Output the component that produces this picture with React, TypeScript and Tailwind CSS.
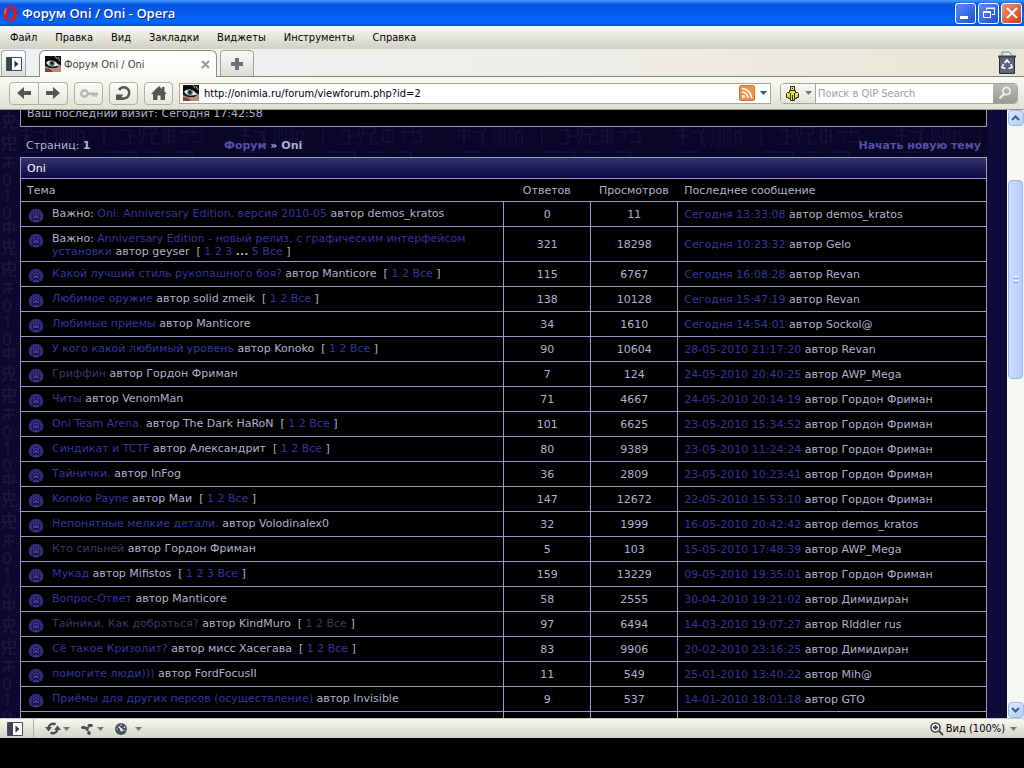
import React from "react";

type Topic = {
  title: string;
  author: string;
  replies: number;
  views: number;
  last: string;
  lastBy: string;
  pages?: string[];
  sticky?: boolean;
  visited?: boolean;
};

const topics: Topic[] = [
  { title: "Oni: Anniversary Edition, версия 2010-05", author: "demos_kratos", replies: 0, views: 11, last: "Сегодня 13:33:08", lastBy: "demos_kratos", sticky: true },
  { title: "Anniversary Edition - новый релиз, с графическим интерфейсом установки", author: "geyser", replies: 321, views: 18298, last: "Сегодня 10:23:32", lastBy: "Gelo", sticky: true, pages: ["1", "2", "3", "...", "5", "Все"] },
  { title: "Какой лучший стиль рукопашного боя?", author: "Manticore", replies: 115, views: 6767, last: "Сегодня 16:08:28", lastBy: "Revan", pages: ["1", "2", "Все"] },
  { title: "Любимое оружие", author: "solid zmeik", replies: 138, views: 10128, last: "Сегодня 15:47:19", lastBy: "Revan", pages: ["1", "2", "Все"] },
  { title: "Любимые приемы", author: "Manticore", replies: 34, views: 1610, last: "Сегодня 14:54:01", lastBy: "Sockol@" },
  { title: "У кого какой любимый уровень", author: "Konoko", replies: 90, views: 10604, last: "28-05-2010 21:17:20", lastBy: "Revan", pages: ["1", "2", "Все"] },
  { title: "Гриффин", author: "Гордон Фриман", replies: 7, views: 124, last: "24-05-2010 20:40:25", lastBy: "AWP_Mega", visited: true },
  { title: "Читы", author: "VenomMan", replies: 71, views: 4667, last: "24-05-2010 20:14:19", lastBy: "Гордон Фриман" },
  { title: "Oni Team Arena.", author: "The Dark HaRoN", replies: 101, views: 6625, last: "23-05-2010 15:34:52", lastBy: "Гордон Фриман", pages: ["1", "2", "Все"] },
  { title: "Синдикат и TCTF", author: "Александрит", replies: 80, views: 9389, last: "23-05-2010 11:24:24", lastBy: "Гордон Фриман", pages: ["1", "2", "Все"] },
  { title: "Тайнички.", author: "InFog", replies: 36, views: 2809, last: "23-05-2010 10:23:41", lastBy: "Гордон Фриман" },
  { title: "Konoko Payne", author: "Маи", replies: 147, views: 12672, last: "22-05-2010 15:53:10", lastBy: "Гордон Фриман", pages: ["1", "2", "Все"] },
  { title: "Непонятные мелкие детали.", author: "Volodinalex0", replies: 32, views: 1999, last: "16-05-2010 20:42:42", lastBy: "demos_kratos" },
  { title: "Кто сильней", author: "Гордон Фриман", replies: 5, views: 103, last: "15-05-2010 17:48:39", lastBy: "AWP_Mega", visited: true },
  { title: "Мукад", author: "Mifistos", replies: 159, views: 13229, last: "09-05-2010 19:35:01", lastBy: "Гордон Фриман", pages: ["1", "2", "3", "Все"] },
  { title: "Вопрос-Ответ", author: "Manticore", replies: 58, views: 2555, last: "30-04-2010 19:21:02", lastBy: "Димидиран" },
  { title: "Тайники. Как добраться?", author: "KindMuro", replies: 97, views: 6494, last: "14-03-2010 19:07:27", lastBy: "RIddler rus", pages: ["1", "2", "Все"], visited: true },
  { title: "Сё такое Кризолит?", author: "мисс Хасегава", replies: 83, views: 9906, last: "20-02-2010 23:16:25", lastBy: "Димидиран", pages: ["1", "2", "Все"] },
  { title: "помогите люди)))", author: "FordFocusII", replies: 11, views: 549, last: "25-01-2010 13:40:22", lastBy: "Mih@" },
  { title: "Приёмы для других персов (осуществление)", author: "Invisible", replies: 9, views: 537, last: "14-01-2010 18:01:18", lastBy: "GTO" },
];

const menu = ["Файл", "Правка", "Вид", "Закладки", "Виджеты", "Инструменты", "Справка"];

function TopicIcon() {
  return (
    <svg width="16" height="16" viewBox="0 0 16 16" className="shrink-0" aria-hidden="true">
      <path d="M3 14.500A7.400 7.400 0 1 1 13 14.500L11 12.500H5z" fill="#3a3284" />
      <path d="M3.300 12.500A6 6 0 1 1 12.700 12.500" fill="none" stroke="#1d1852" strokeWidth="1.200" strokeDasharray="1.500 1.300" />
      <circle cx="8" cy="9" r="4.300" fill="#0c0828" />
      <circle cx="8" cy="9" r="3.400" fill="#443b9c" />
      <path d="M5.800 9.500a2.200 2.200 0 0 1 4.400 0M6 11.500h4" fill="none" stroke="#120d3c" strokeWidth="1" />
      <path d="M4 14.500Q8 16.500 12 14.500L11 13H5z" fill="#3a3284" />
    </svg>
  );
}

function Favicon() {
  return (
    <svg width="16" height="16" viewBox="0 0 16 16" className="shrink-0" aria-hidden="true">
      <path fill="#170d12" d="M0 0h16v16H0z" />
      <path fill="#b98b7c" d="M0 10l5 2 6 0 5-3v7H0z" />
      <path fill="#7b4238" d="M0 12l5 1 3 3H0z" />
      <path fill="#ede9e6" d="M1 6.500Q5 3 10 5.500L14 9Q7 12 3 9z" />
      <circle cx="7" cy="7.400" r="2.700" fill="#3d7668" />
      <circle cx="7" cy="7.200" r="1.300" fill="#06110e" />
      <path d="M0 5Q6 1 11 4.500L16 8" fill="none" stroke="#000" strokeWidth="1.800" />
      <path d="M10 0l2 3M13 1l2 4M12 10l3-1" stroke="#d9d2cc" strokeWidth=".8" />
    </svg>
  );
}

function Caret({ className }: { className: string }) {
  return (
    <svg width="7" height="4" viewBox="0 0 7 4" className={className} aria-hidden="true">
      <path d="M0 0h7L3.500 4z" fill="currentColor" />
    </svg>
  );
}

function PanelIcon() {
  return (
    <svg width="16" height="14" viewBox="0 0 16 14" aria-hidden="true">
      <path fill="#fff" stroke="#444b5a" d="M.5 .5h15v13H.5z" />
      <path fill="#3c4354" d="M1 1h5v12H1z" />
      <path fill="#2f3646" d="M8.500 3.500L12.500 7l-4 3.500z" />
    </svg>
  );
}

function Backdrop() {
  return (
    <>
      <svg className="absolute inset-0 h-full w-full" aria-hidden="true">
        <defs>
          <pattern id="city" width="219" height="88" x="-14" y="8" patternUnits="userSpaceOnUse">
            <rect width="219" height="88" fill="#0a062a" />
            <g fill="none" stroke="#17133b">
              <path d="M62 8q-6 10 0 20M68 8q6 10 0 20M92 14h6v12h-6zM118 12v16M136 12h8v14h-8M144 18h10v-8M158 10h12v6h-12zM158 16l-4 12M166 16v10h8M178 12h10v12h-10zM183 8v18M194 14h6v8M202 14h14v10h-10M208 8v8" />
              <path d="M34 12h12M34 18h12M40 8v20M48 14h10v14M36 34h20M120 34h30v8h-30M160 34h18M190 34h16v6" />
              <path d="M40 50h22v22H40zM46 56h10v8H46zM70 50h24M76 56h16v12H76zM108 50v20M114 54h12M140 50h30v10M146 66h14v10h-14zM186 52h18v18h-18" />
            </g>
            <path d="M74 2v28M77 2v28M81 2v28M85 2v28M88 2v28M160 42v36M164 42v36M168 42v36" stroke="#14103a" />
          </pattern>
          <pattern id="glyphs" width="20" height="126" patternUnits="userSpaceOnUse">
            <rect width="20" height="126" fill="#0c0830" />
            <g fill="none" stroke="#1b1742" strokeWidth="1.400">
              <path d="M4 6h10v6H4zM9 2v10M6 12q0 6-4 7M11 12v6h6M3 28h12v6H3zM9 24v10M5 34q0 5-3 7M10 34v6h6M4 48h10M9 46v12M5 53h9M3 58l3-4" />
              <ellipse cx="7" cy="70" rx="3.500" ry="5.500" />
              <path d="M5 82l3-2v12" />
              <ellipse cx="7" cy="103" rx="3.500" ry="5.500" />
              <path d="M4 114h10v6H4zM9 111v12" />
            </g>
          </pattern>
        </defs>
        <rect width="100%" height="100%" fill="url(#city)" />
        <rect width="20" height="100%" fill="url(#glyphs)" />
      </svg>
      <div className="absolute inset-y-0 right-0 w-5 bg-[repeating-linear-gradient(90deg,#0e0a36_0,#0e0a36_3px,#120d3e_3px,#120d3e_4px)]" />
    </>
  );
}

function TopicRow({ t }: { t: Topic }) {
  const tone = t.visited ? "text-[#40346a]" : "text-[#3832a2]";
  return (
    <tr className="h-[25px]">
      <td className="border-t border-[#9a98c8] pt-[5px] pr-1 pb-[3px] pl-[7px] align-top">
        <div className="flex items-start gap-2">
          <TopicIcon />
          <div>
            {t.sticky && "Важно: "}
            <a href="#topic" className={tone}>{t.title}</a>
            {" автор " + t.author}
            {t.pages && (
              <span>
                {"\u00a0 [ "}
                {t.pages.map((p) => (
                  <React.Fragment key={p}>
                    {p === "..." ? <b>...</b> : <a href="#page" className={tone}>{p}</a>}{" "}
                  </React.Fragment>
                ))}
                ]
              </span>
            )}
          </div>
        </div>
      </td>
      <td className="border-t border-l border-[#9a98c8] text-center">{t.replies}</td>
      <td className="border-t border-l border-[#9a98c8] text-center">{t.views}</td>
      <td className="border-t border-l border-[#9a98c8] pl-[6px]">
        <a href="#last" className="text-[#3832a2]">{t.last}</a> автор {t.lastBy}
      </td>
    </tr>
  );
}

const toolBtn = "flex h-[23px] items-center justify-center rounded border border-[#b0b0a4] bg-gradient-to-b from-[#fdfdfa] to-[#e6e6dc]";
const scrollBtn = "flex h-4 w-4 items-center justify-center rounded-sm border border-[#9db8ec] bg-gradient-to-br from-[#dce7fe] to-[#b4cbfa] text-[#3f5c92]";

export default function App() {
  return (
    <div className="flex h-screen flex-col overflow-hidden bg-black font-['DejaVu_Sans_Condensed','DejaVu_Sans',sans-serif] text-[11px] leading-[13px] text-black">
      <header className="flex h-[26px] shrink-0 items-center bg-[linear-gradient(#3f95fb_0,#2a82f2_2px,#0557e4_4px,#0557e4_11px,#0264fb_18px,#0264fb_23px,#0144d0)] pr-[2px] pl-[3px]">
        <svg width="15" height="17" viewBox="0 0 15 17" aria-hidden="true">
          <path fillRule="evenodd" fill="#d51a23" d="M7.500.5C3 .5.700 4 .700 8.500S3 16.500 7.500 16.500 14.300 13 14.300 8.500 12 .500 7.500 .500zM7.500 2.500c1.800 0 2.600 2.400 2.600 6s-.8 6-2.600 6-2.600-2.400-2.600-6 .8-6 2.600-6z" />
          <path d="M3 3.500Q1.600 6 1.900 9" fill="none" stroke="#ff8a88" />
        </svg>
        <h1 className="ml-1 flex-1 font-['Open_Sans',sans-serif] text-[13px] leading-[18px] font-semibold text-white [text-shadow:1px_1px_0_#0a2d8c]">Форум Oni / Oni - Opera</h1>
        <div className="flex gap-[2px]">
          <button aria-label="Свернуть" className="flex h-[21px] w-[21px] items-end rounded-[3px] border border-white bg-gradient-to-br from-[#5a8cf4] to-[#1d4fd8] p-1">
            <svg width="8" height="3" className="block" aria-hidden="true"><path fill="#fff" d="M0 0h8v3H0z" /></svg>
          </button>
          <button aria-label="Восстановить" className="flex h-[21px] w-[21px] items-center justify-center rounded-[3px] border border-white bg-gradient-to-br from-[#5a8cf4] to-[#1d4fd8]">
            <svg width="12" height="12" viewBox="0 0 12 12" aria-hidden="true"><path fill="none" stroke="#fff" d="M3.500 3V1.500h8v6H9M3 1h9M.5 4.500h7v6h-7zM0 5.500h8" /></svg>
          </button>
          <button aria-label="Закрыть" className="flex h-[21px] w-[21px] items-center justify-center rounded-[3px] border border-white bg-gradient-to-br from-[#ee9070] to-[#cf3a13]">
            <svg width="12" height="12" viewBox="0 0 12 12" aria-hidden="true"><path stroke="#fff" strokeWidth="2" d="M1 1l10 10M11 1L1 11" /></svg>
          </button>
        </div>
      </header>

      <nav className="flex h-[23px] shrink-0 items-center gap-[18px] bg-gradient-to-b from-[#fafaf5] to-[#d0d1c3] pl-[10px]">
        {menu.map((m) => <button key={m}>{m}</button>)}
      </nav>

      <div className="flex h-7 shrink-0 items-end border-b border-[#84847c] bg-gradient-to-r from-[#eef1f4] via-[#efeeea] to-[#e9e6d6] pl-px">
        <button aria-label="Панели" className="flex h-[26px] w-[25px] items-center justify-center rounded-t border border-b-0 border-[#a3a7a8] bg-gradient-to-b from-white to-[#dcdedb]"><PanelIcon /></button>
        <div className="ml-[13px] flex h-[27px] w-[178px] translate-y-px items-center rounded-t-md border border-b-0 border-[#8d8d88] bg-gradient-to-b from-white to-[#fafaf6] pr-[6px] pl-[5px]">
          <Favicon />
          <span className="ml-[3px] flex-1 text-[#444]">Форум Oni / Oni</span>
          <button aria-label="Закрыть вкладку">
            <svg width="9" height="9" viewBox="0 0 9 9" aria-hidden="true"><path stroke="#9a9a96" strokeWidth="2" d="M1 1l7 7M8 1L1 8" /></svg>
          </button>
        </div>
        <button aria-label="Новая вкладка" className="ml-[3px] flex h-[26px] w-[34px] items-center justify-center rounded-t border border-b-0 border-[#a3a39d] bg-gradient-to-b from-[#fafafa] to-[#dcdcd6]">
          <svg width="12" height="12" viewBox="0 0 12 12" aria-hidden="true"><path fill="#6b707a" d="M4 0h4v4h4v4H8v4H4V8H0V4h4z" /></svg>
        </button>
        <button aria-label="Корзина" className="mr-2 mb-[2px] ml-auto">
          <svg width="18" height="23" viewBox="0 0 18 23" aria-hidden="true">
            <path fill="#dcebf0" stroke="#6c8794" d="M4 5V1h7l4 4" />
            <path fill="#5e6378" stroke="#272b3c" d="M1.500 5.500h15v17h-15z" />
            <path d="M0 5.500h18" stroke="#3b4054" strokeWidth="2" />
            <path d="M6.500 12L9 9l2.500 3M13 13l1 3.500-3.500 1M7.500 17.500L4 16.500l1.500-3.500" fill="none" stroke="#fff" strokeWidth="1.600" />
          </svg>
        </button>
      </div>

      <div className="flex h-[33px] shrink-0 items-center border-b border-[#9a9a90] bg-gradient-to-b from-[#fafaf4] to-[#e0e1d2] pr-[6px] pl-[9px]">
        <div className="flex">
          <button aria-label="Назад" className={toolBtn + " w-[30px] rounded-r-none"}>
            <svg width="14" height="12" viewBox="0 0 14 12" aria-hidden="true"><path fill="#555552" d="M0 6l7-6v4h7v4H7v4z" /></svg>
          </button>
          <button aria-label="Вперёд" className={toolBtn + " w-[29px] rounded-l-none border-l-0"}>
            <svg width="14" height="12" viewBox="0 0 14 12" aria-hidden="true"><path fill="#555552" d="M14 6L7 0v4H0v4h7v4z" /></svg>
          </button>
        </div>
        <button aria-label="Ключ" className={toolBtn + " ml-[6px] w-[29px]"}>
          <svg width="18" height="9" viewBox="0 0 18 9" aria-hidden="true"><circle cx="4.500" cy="4.500" r="3.200" fill="none" stroke="#b6b6b0" strokeWidth="2.400" /><path fill="#b6b6b0" d="M8 3.500h10v2.500h-1v2h-2V6h-1v1.500h-2V6H8z" /></svg>
        </button>
        <button aria-label="Обновить" className={toolBtn + " ml-[6px] w-[29px]"}>
          <svg width="17" height="16" viewBox="0 0 17 16" aria-hidden="true"><path fill="none" stroke="#555552" strokeWidth="2.600" d="M4 5A5.500 5.500 0 1 1 8 13.300" /><path fill="#555552" d="M1 9.500h7.500L6.500 11.500l2 2V15H1z" /></svg>
        </button>
        <button aria-label="Домой" className={toolBtn + " ml-[6px] w-[29px]"}>
          <svg width="16" height="14" viewBox="0 0 16 14" aria-hidden="true"><path fill="#555552" d="M8 0l3 3V1h2.500v4.500L16 8h-2v6H9.500V9.500h-3V14H2V8H0z" /></svg>
        </button>
        <label className="ml-[6px] flex h-[21px] min-w-0 flex-1 items-center border border-[#a5a59c] bg-white pr-[3px] pl-[3px]">
          <Favicon />
          <input aria-label="Адрес" defaultValue="http://onimia.ru/forum/viewforum.php?id=2" className="ml-[5px] min-w-0 flex-1 outline-none" />
          <svg width="16" height="16" viewBox="0 0 16 16" aria-hidden="true">
            <rect x=".5" y=".5" width="15" height="15" rx="1.500" fill="#ee9448" stroke="#cf7530" />
            <circle cx="4.500" cy="11.500" r="1.500" fill="#fff" />
            <path d="M3 7a6 6 0 0 1 6 6M3 3.500A9.500 9.500 0 0 1 12.500 13" fill="none" stroke="#fff" strokeWidth="1.700" />
          </svg>
          <Caret className="ml-[5px] text-[#3d5572]" />
        </label>
        <div className="ml-[9px] flex h-[21px] w-[238px] overflow-hidden rounded border border-[#a5a59c] bg-white">
          <button aria-label="Поисковая система" className="flex w-[35px] items-center justify-end gap-[6px] border-r border-[#a5a59c] bg-gradient-to-b from-[#fafaf6] to-[#e4e4da] pr-[3px]">
            <svg width="13" height="15" viewBox="0 0 13 15" aria-hidden="true">
              <path fill="#e7e32a" stroke="#2c2b0c" d="M4.500 .5h4v4h-4z" />
              <path fill="#e7e32a" stroke="#2c2b0c" d="M3.500 4.500h6v2h2l1 1v4h-2v1h-2v2h-4v-2h-2v-1h-2v-4l1-1h2z" />
              <path d="M6.500 2v1M4.500 7v5M6.500 9v5M8.500 7v5" stroke="#2c2b0c" />
            </svg>
            <Caret className="text-[#777]" />
          </button>
          <input aria-label="Поиск" placeholder="Поиск в QIP Search" className="min-w-0 flex-1 pl-[2px] outline-none placeholder:text-[#a0a09c]" />
          <button aria-label="Найти" className="flex w-6 items-center justify-center bg-gradient-to-b from-[#bcbcb6] to-[#999993]">
            <svg width="14" height="14" viewBox="0 0 14 14" aria-hidden="true"><circle cx="8.500" cy="5" r="3.600" fill="none" stroke="#eee" strokeWidth="1.800" /><path d="M6 8l-4.500 4.500" stroke="#eee" strokeWidth="2.400" /></svg>
          </button>
        </div>
      </div>

      <main className="flex min-h-0 flex-1">
        <div className="relative min-w-0 flex-1 overflow-hidden font-['DejaVu_Sans',sans-serif] text-[#b2b0d0]">
          <Backdrop />
          <div className="relative px-5">
            <div className="flex h-[17px] items-end overflow-hidden border border-t-0 border-[#9a98c8] bg-black pb-[6px] pl-[6px]">
              <p className="shrink-0">Ваш последний визит: Сегодня 17:42:58</p>
            </div>
            <div className="flex h-[30px] items-center px-[6px] pt-[6px]">
              <span className="w-[198px]">Страниц: <b>1</b></span>
              <b><a href="#forum" className="text-[#5650a8]">Форум</a> » Oni</b>
              <a href="#new" className="ml-auto font-bold text-[#5650a8]">Начать новую тему</a>
            </div>
            <section className="border border-[#9a98c8] bg-black">
              <h2 className="flex h-[21px] items-center border-b border-[#9a98c8] bg-gradient-to-b from-[#37326c] to-[#0d0946] pl-[6px] text-white">Oni</h2>
              <table className="w-full table-fixed border-separate border-spacing-0">
                <thead>
                  <tr className="h-[22px]">
                    <th className="w-1/2 pt-px pl-[6px] text-left font-normal">Тема</th>
                    <th className="w-[87px] pt-px font-normal">Ответов</th>
                    <th className="w-[87px] pt-px font-normal">Просмотров</th>
                    <th className="w-[32%] pt-px pl-[7px] text-left font-normal">Последнее сообщение</th>
                  </tr>
                </thead>
                <tbody>
                  {topics.map((t) => <TopicRow key={t.title} t={t} />)}
                  <tr className="h-[25px]">
                    <td className="border-t border-[#9a98c8] pt-[5px] pb-[3px] pl-[7px]"><TopicIcon /></td>
                    <td className="border-t border-l border-[#9a98c8]" />
                    <td className="border-t border-l border-[#9a98c8]" />
                    <td className="border-t border-l border-[#9a98c8]" />
                  </tr>
                </tbody>
              </table>
            </section>
          </div>
        </div>
        <div className="flex w-[17px] shrink-0 flex-col items-center bg-[#f7f7f1]">
          <button aria-label="Вверх" className={scrollBtn}><svg width="9" height="6" viewBox="0 0 9 6" aria-hidden="true"><path d="M1 5l3.500-3.500L8 5" fill="none" stroke="currentColor" strokeWidth="2" /></svg></button>
          <div className="flex min-h-0 w-full flex-1 flex-col items-center">
            <div className="grow-[54] basis-0" />
            <div className="flex w-[15px] grow-[198] basis-0 flex-col items-center justify-center gap-px rounded-sm border border-[#96b2ea] bg-gradient-to-r from-[#cddcfe] to-[#b9cdfa]">
              <i className="h-px w-[6px] bg-[#eef4fe]" /><i className="h-px w-[6px] bg-[#8cb0f8]" /><i className="h-px w-[6px] bg-[#eef4fe]" /><i className="h-px w-[6px] bg-[#8cb0f8]" />
            </div>
            <div className="grow-[324] basis-0" />
          </div>
          <button aria-label="Вниз" className={scrollBtn}><svg width="9" height="6" viewBox="0 0 9 6" aria-hidden="true"><path d="M1 1l3.500 3.500L8 1" fill="none" stroke="currentColor" strokeWidth="2" /></svg></button>
        </div>
      </main>

      <footer className="flex h-5 shrink-0 items-center border-t border-[#c8c8bc] bg-gradient-to-b from-[#f8f8f2] to-[#d3d4c5] pr-[7px] pl-[7px] text-[#777]">
        <button aria-label="Панели"><PanelIcon /></button>
        <span className="ml-[10px] h-full w-px bg-[#b0b0a6]" />
        <button aria-label="Синхронизация" className="ml-[11px] flex items-center gap-[2px]">
          <svg width="16" height="13" viewBox="0 0 16 13" aria-hidden="true"><path fill="none" stroke="#4c525c" strokeWidth="2.400" d="M3.500 6a4.500 4.500 0 0 1 7-3.500M12.500 7a4.500 4.500 0 0 1-7 3.500" /><path fill="#4c525c" d="M0 5h7L3.500 9.500zM9 8h7l-3.500-4.500z" /></svg>
          <Caret className="" />
        </button>
        <button aria-label="Unite" className="ml-[11px] flex items-center gap-[4px]">
          <svg width="12" height="12" viewBox="0 0 12 12" fill="#4c525c" aria-hidden="true"><circle cx="6" cy="6" r="1.800" /><ellipse cx="9.200" cy="2.500" rx="2.800" ry="1.800" /><ellipse cx="2.500" cy="4.500" rx="2.500" ry="1.800" /><ellipse cx="8" cy="10" rx="1.800" ry="2" /><path d="M2 5l4 1 3-3M6 6l2 4" stroke="#4c525c" /></svg>
          <Caret className="" />
        </button>
        <button aria-label="Turbo" className="ml-[11px] flex items-center gap-2">
          <svg width="12" height="12" viewBox="0 0 12 12" aria-hidden="true"><circle cx="6" cy="6" r="6" fill="#4a5260" /><path d="M3.500 3.500l3 3M6 1.500v1M10 4l-1 .8M1.500 6h1M9.500 7.500l.8.300" stroke="#fff" strokeWidth="1.200" /><circle cx="6.700" cy="7" r="1.600" fill="#dfe3e6" /></svg>
          <Caret className="" />
        </button>
        <button className="ml-auto flex items-center">
          <svg width="14" height="14" viewBox="0 0 14 14" aria-hidden="true"><circle cx="5.500" cy="5.500" r="4.500" fill="#fff" stroke="#40444c" strokeWidth="1.600" /><path d="M3 5.500h5M5.500 3v5M9 9l4 4" stroke="#40444c" strokeWidth="1.800" /></svg>
          <span className="ml-[2px] text-black">Вид (100%)</span>
          <Caret className="ml-[5px]" />
        </button>
      </footer>
      <div className="h-[30px] shrink-0 bg-black" />
    </div>
  );
}
